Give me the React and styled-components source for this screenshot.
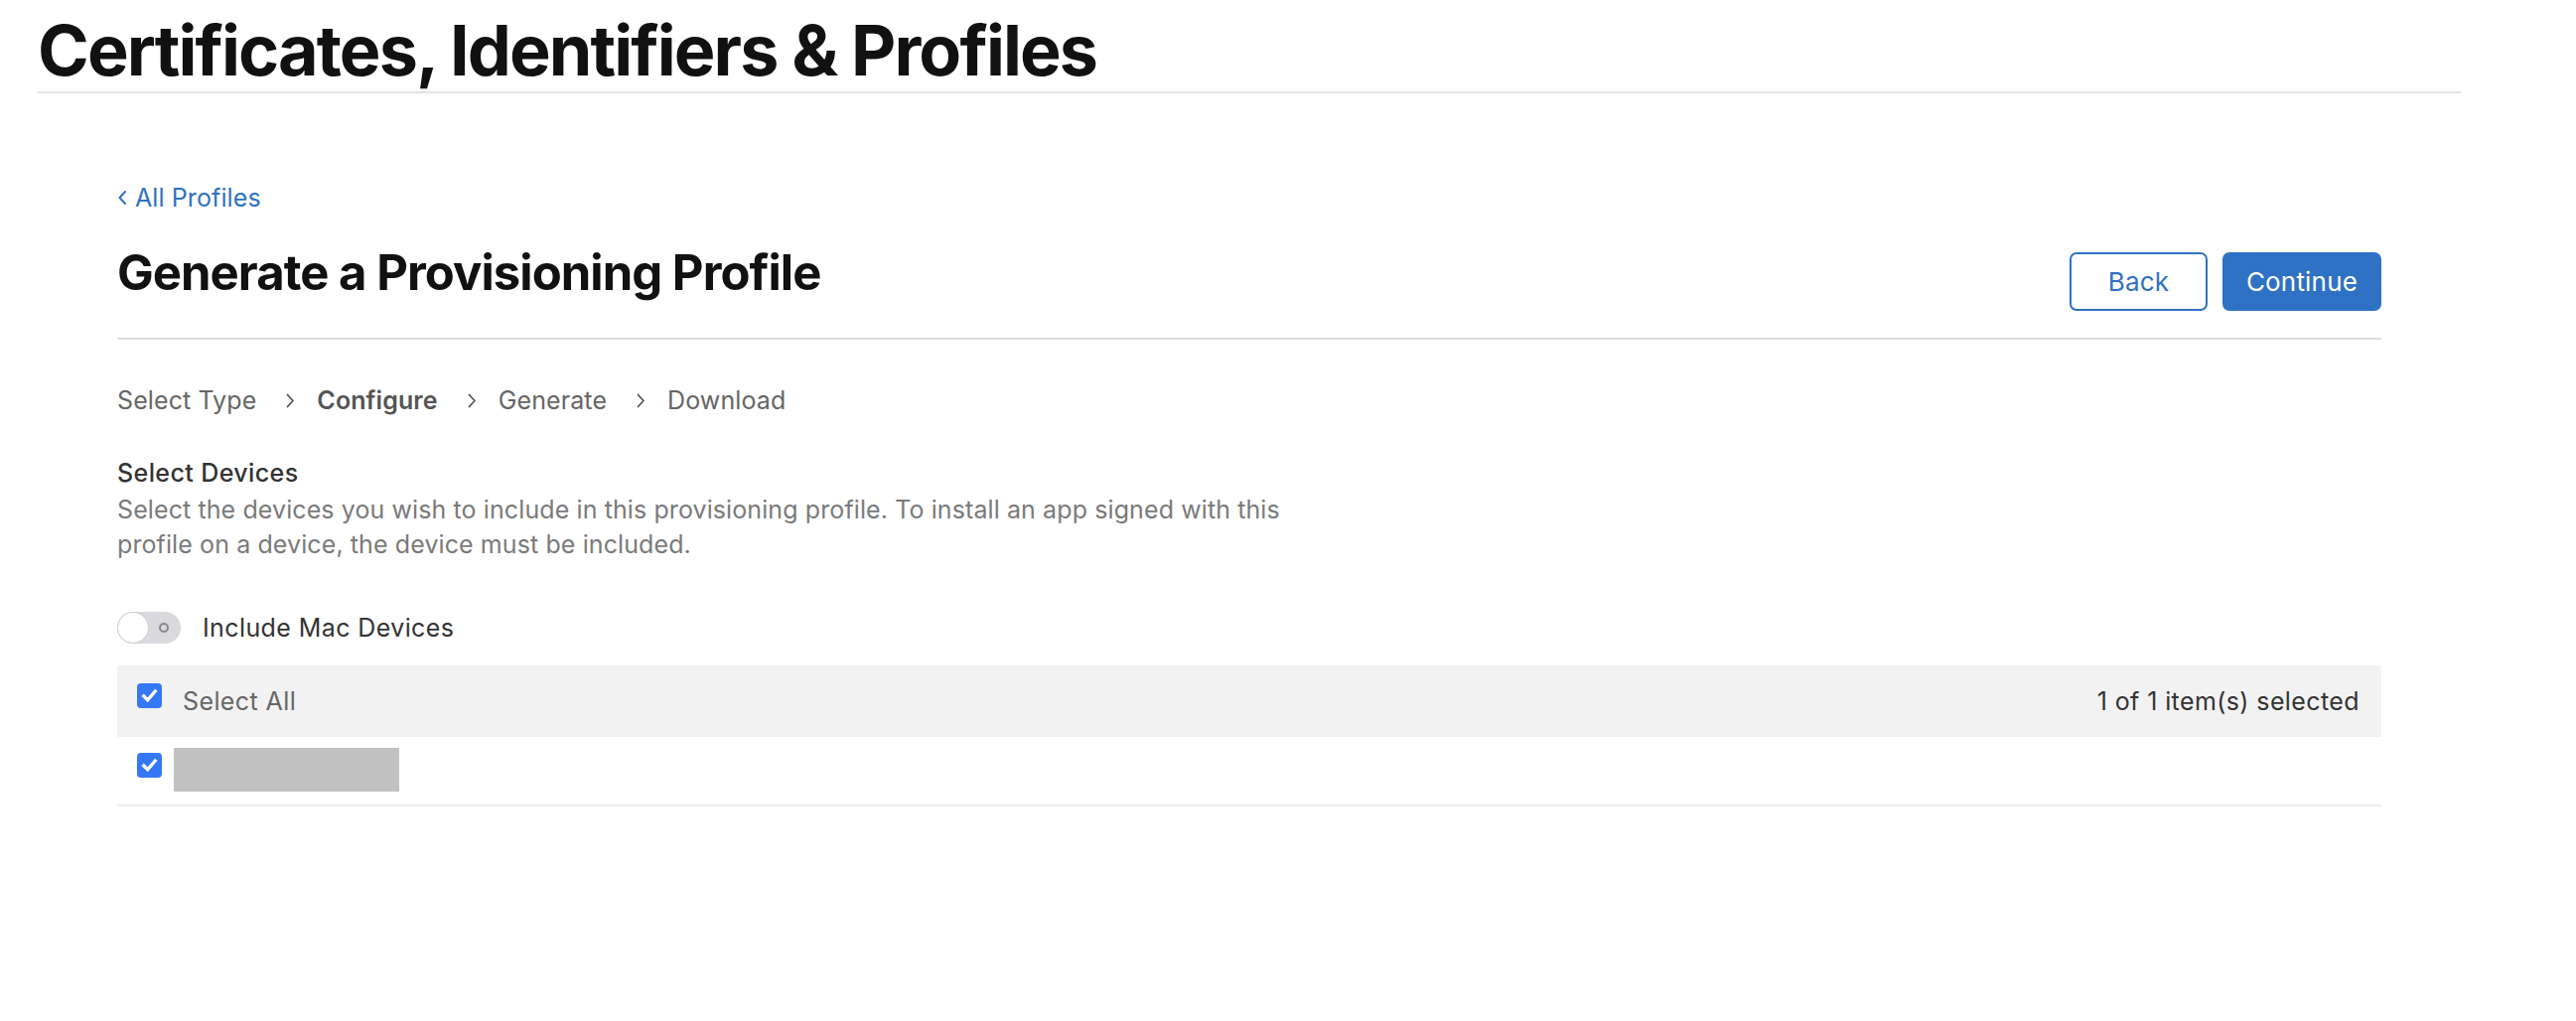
import React from "react";
import styled, { createGlobalStyle } from "styled-components";

const GlobalStyle = createGlobalStyle`
  html, body { margin: 0; padding: 0; background: #fff; }
  body {
    font-family: Inter, "Noto Sans", "Liberation Sans", sans-serif;
    color: #333;
    -webkit-font-smoothing: antialiased;
  }
`;

// --- layout ---

const Page = styled.div`
  width: 2594px;
  min-height: 1028px;
`;

const Header = styled.header`
  width: 2440px;
  margin-left: 38px;
  padding-top: 16px;
  padding-bottom: 6px;
  border-bottom: 2px solid #e3e3e3;
`;

const SiteTitle = styled.h1`
  margin: 0;
  font-size: 70px;
  line-height: 70px;
  font-weight: 700;
  letter-spacing: -1.9px;
  color: #111;
`;

const Main = styled.main`
  width: 2280px;
  margin-left: 118px;
`;

const BackLink = styled.a`
  display: inline-flex;
  align-items: center;
  gap: 8px;
  margin-top: 92px;
  font-size: 25px;
  line-height: 26px;
  letter-spacing: 0.1px;
  color: #2f71c4;
  text-decoration: none;
  cursor: pointer;
`;

const TitleRow = styled.div`
  display: flex;
  justify-content: space-between;
  align-items: flex-start;
  margin-top: 38px;
  padding-bottom: 27px;
  border-bottom: 2px solid #dedede;
`;

const PageTitle = styled.h2`
  margin: 0;
  font-size: 49px;
  line-height: 50px;
  font-weight: 700;
  letter-spacing: -0.95px;
  color: #111;
`;

const Actions = styled.div`
  display: flex;
  gap: 15px;
  margin-top: 4px;
`;

const Button = styled.button`
  height: 59px;
  width: ${p => (p.$primary ? "160px" : "139px")};
  padding: 0;
  border-radius: 7px;
  border: 2px solid #2f71c4;
  background: ${p => (p.$primary ? "#2f71c4" : "#fff")};
  color: ${p => (p.$primary ? "#fff" : "#2f71c4")};
  font-family: inherit;
  font-size: 26px;
  letter-spacing: 0.2px;
  font-weight: 400;
  cursor: pointer;
`;

const Steps = styled.ol`
  display: flex;
  align-items: center;
  list-style: none;
  margin: 49px 0 0;
  padding: 0;
  font-size: 25px;
  line-height: 24px;
  letter-spacing: 0.1px;
  color: #666;
`;

const Step = styled.li`
  font-weight: ${p => (p.$active ? 600 : 400)};
  color: ${p => (p.$active ? "#555" : "#666")};
`;

const Chevron = styled.span`
  display: inline-flex;
  margin: 0 22px 0 30px;
  color: #555;
  svg { display: block; }
`;

const SectionLabel = styled.h3`
  margin: 49px 0 0;
  font-size: 25px;
  line-height: 24px;
  letter-spacing: 0.4px;
  font-weight: 500;
  color: #333;
`;

const Description = styled.p`
  margin: 8px 0 0;
  font-size: 25px;
  line-height: 35px;
  letter-spacing: 0.1px;
  color: #7a7a7a;
  white-space: nowrap;
`;

const ToggleRow = styled.label`
  display: flex;
  align-items: center;
  gap: 22px;
  margin-top: 50px;
  font-size: 25px;
  letter-spacing: 0.4px;
  color: #333;
`;

const Track = styled.span`
  position: relative;
  display: inline-block;
  width: 64px;
  height: 32px;
  border-radius: 16px;
  background: #d9d9de;
  flex-shrink: 0;
`;

const Knob = styled.span`
  position: absolute;
  left: 1px;
  top: 1px;
  width: 30px;
  height: 30px;
  border-radius: 50%;
  background: #fff;
  box-shadow: 0 0 0 1px #d0d0d4;
`;

const OffMark = styled.span`
  position: absolute;
  right: 12px;
  top: 11px;
  width: 10px;
  height: 10px;
  box-sizing: border-box;
  border-radius: 50%;
  border: 2px solid #8a8a8e;
`;

const Table = styled.div`
  margin-top: 22px;
`;

const HeadRow = styled.div`
  display: flex;
  align-items: center;
  height: 72px;
  padding: 0 22px 0 20px;
  background: #f2f2f2;
  font-size: 25px;
  letter-spacing: 0.4px;
  color: #666;
`;

const HeadLabel = styled.span`
  margin-left: 21px;
  flex: 1;
`;

const Count = styled.span`
  color: #333;
  letter-spacing: 0.4px;
`;

const DeviceRow = styled.div`
  display: flex;
  align-items: flex-start;
  height: 68px;
  padding-left: 20px;
  border-bottom: 2px solid #ececec;
`;

const Check = styled.span`
  display: inline-flex;
  align-items: center;
  justify-content: center;
  width: 25px;
  height: 25px;
  border-radius: 4px;
  background: #3478f6;
  flex-shrink: 0;
  margin-top: ${p => p.$top || 0}px;
`;

const Redacted = styled.span`
  display: block;
  width: 227px;
  height: 44px;
  margin: 11px 0 0 12px;
  background: #c1c1c1;
`;

const CheckMark = () => (
  <svg width="19" height="19" viewBox="0 0 16 16">
    <path d="M3.2 8.4 L6.5 11.6 L12.8 4.2" fill="none" stroke="#fff" strokeWidth="2.8" strokeLinecap="square" strokeLinejoin="miter" />
  </svg>
);

const ChevronIcon = () => (
  <svg width="9" height="15" viewBox="0 0 9 15">
    <path d="M1.5 1.5 L7 7.5 L1.5 13.5" fill="none" stroke="currentColor" strokeWidth="1.8" strokeLinecap="round" strokeLinejoin="round" />
  </svg>
);

const steps = [
  { label: "Select Type" },
  { label: "Configure", active: true },
  { label: "Generate" },
  { label: "Download" },
];

export default function App() {
  return (
    <Page>
      <GlobalStyle />
      <Header>
        <SiteTitle>Certificates, Identifiers &amp; Profiles</SiteTitle>
      </Header>

      <Main>
        <BackLink>
          <svg width="10" height="16" viewBox="0 0 10 16">
            <path d="M8 2 L2.5 8 L8 14" fill="none" stroke="#2f71c4" strokeWidth="2" strokeLinecap="round" strokeLinejoin="round" />
          </svg>
          All Profiles
        </BackLink>

        <TitleRow>
          <PageTitle>Generate a Provisioning Profile</PageTitle>
          <Actions>
            <Button>Back</Button>
            <Button $primary>Continue</Button>
          </Actions>
        </TitleRow>

        <Steps>
          {steps.map((s, i) => (
            <React.Fragment key={s.label}>
              {i > 0 && (
                <Chevron><ChevronIcon /></Chevron>
              )}
              <Step $active={s.active}>{s.label}</Step>
            </React.Fragment>
          ))}
        </Steps>

        <SectionLabel>Select Devices</SectionLabel>
        <Description>
          Select the devices you wish to include in this provisioning profile. To install an app signed with this
          <br />
          profile on a device, the device must be included.
        </Description>

        <ToggleRow>
          <Track>
            <Knob />
            <OffMark />
          </Track>
          Include Mac Devices
        </ToggleRow>

        <Table>
          <HeadRow>
            <Check $top={-11}><CheckMark /></Check>
            <HeadLabel>Select All</HeadLabel>
            <Count>1 of 1 item(s) selected</Count>
          </HeadRow>
          <DeviceRow>
            <Check $top={16}><CheckMark /></Check>
            <Redacted />
          </DeviceRow>
        </Table>
      </Main>
    </Page>
  );
}
